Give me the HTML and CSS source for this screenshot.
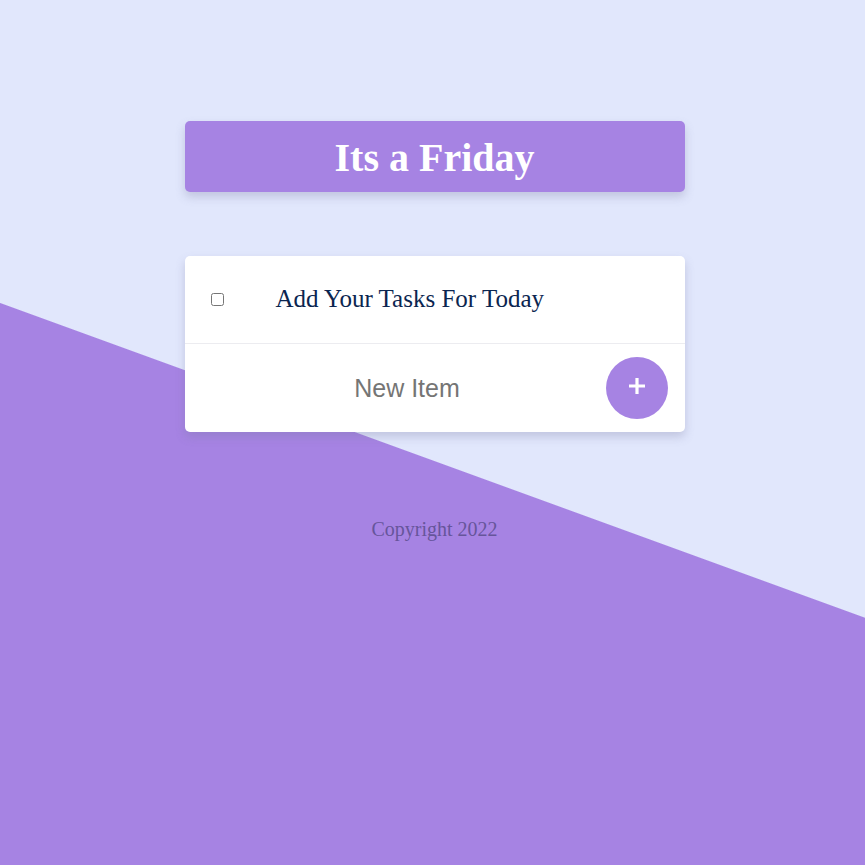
FILE: index.html
```html
<!DOCTYPE html>
<html lang="en">
<head>
<meta charset="utf-8">
<title>To-Do List</title>
<link rel="stylesheet" href="styles.css">
</head>
<body>
  <main class="page">
    <header class="heading">
      <h1>Its a Friday</h1>
    </header>
    <section class="card">
      <div class="item">
        <input type="checkbox" class="check">
        <p class="item-text">Add Your Tasks For Today</p>
      </div>
      <form class="new-item" onsubmit="return false">
        <input type="text" class="new-input" name="newItem" placeholder="New Item" autocomplete="off">
        <button type="submit" class="add-btn" aria-label="Add">
          <svg width="18" height="18" viewBox="0 0 18 18"><path d="M9 1v16M1 9h16" stroke="#fff" stroke-width="3.2" fill="none"/></svg>
        </button>
      </form>
    </section>
    <footer class="footer">Copyright 2022</footer>
  </main>
</body>
</html>
```
FILE: styles.css
```css
html {
  height: 100%;
  background: linear-gradient(200deg, #e1e7fc 580px, #a683e3 581px);
  background-attachment: fixed;
}
body {
  margin: 0;
  min-height: 100%;
  font-family: "Liberation Serif", "Times New Roman", serif;
}
.page {
  display: flex;
  flex-direction: column;
  align-items: center;
  padding-top: 121px;
  padding-left: 4px;
}
.heading {
  width: 500px;
  height: 71px;
  box-sizing: border-box;
  padding-top: 3px;
  background: #a683e3;
  border-radius: 5px;
  box-shadow: 0 5px 10px rgba(120, 120, 160, 0.3);
  display: flex;
  align-items: center;
  justify-content: center;
}
.heading h1 {
  margin: 0;
  color: #fff;
  font-size: 40px;
  font-weight: bold;
  line-height: 1;
}
.card {
  margin-top: 64px;
  width: 500px;
  background: #fff;
  border-radius: 5px;
  box-shadow: 0 5px 10px rgba(120, 120, 160, 0.3);
}
.item {
  height: 87px;
  display: flex;
  align-items: center;
  border-bottom: 1px solid #ececf0;
}
.check {
  width: 13px;
  height: 13px;
  margin: 0 0 0 26px;
}
.item-text {
  margin: 0 0 2px 52px;
  font-size: 25px;
  color: #0b2550;
}
.new-item {
  height: 88px;
  display: flex;
  align-items: center;
  padding-right: 17px;
  margin: 0;
}
.new-input {
  flex: 1;
  min-width: 0;
  border: none;
  outline: none;
  background: transparent;
  font-family: "Liberation Sans", Arial, sans-serif;
  font-size: 25px;
  text-align: center;
  padding: 0 0 0 24px;
  color: #333;
}
.new-input::placeholder {
  color: #757575;
}
.add-btn {
  width: 62px;
  height: 62px;
  border-radius: 50%;
  border: none;
  background: #a683e3;
  padding: 0 0 5px 0;
  display: flex;
  align-items: center;
  justify-content: center;
  cursor: pointer;
}
.footer {
  margin-top: 86px;
  font-size: 20px;
  color: #66559b;
}
```
